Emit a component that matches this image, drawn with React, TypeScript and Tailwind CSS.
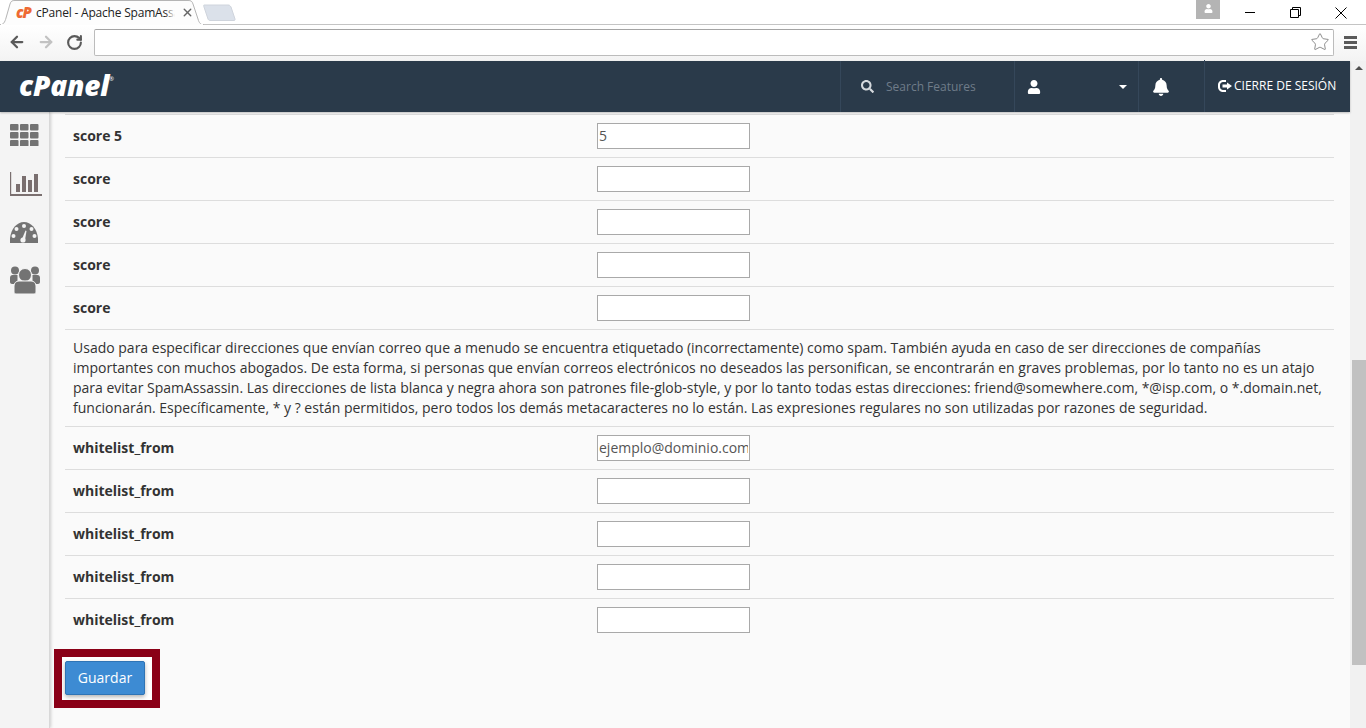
import React from 'react';
import { FaBell, FaSearch, FaUser } from 'react-icons/fa';
import { ArrowLeft, ArrowRight, RotateCw, Star, X } from 'lucide-react';

const font = { fontFamily: '"Open Sans", sans-serif' };

const GridIcon = () => (
  <svg width="29" height="22" viewBox="0 0 29 22" fill="#737373">
    {[0, 8, 16].map((y) =>
      [0, 10, 20].map((x) => <rect key={`${x}-${y}`} x={x} y={y} width="8.5" height="6.5" rx="1" />),
    )}
  </svg>
);

const ChartIcon = () => (
  <svg width="32" height="24" viewBox="0 0 32 24" fill="#7a6f6f">
    <path d="M0 0h1.2v22H32v2H0z" />
    <rect x="6" y="12" width="4" height="8" />
    <rect x="12" y="4" width="4" height="16" />
    <rect x="18" y="8" width="4" height="12" />
    <rect x="24" y="2" width="4" height="18" />
  </svg>
);

const GaugeIcon = () => (
  <svg width="28" height="21" viewBox="0 0 28 21">
    <path d="M0 21C-1 9 6 0 14 0S29 9 28 21Z" fill="#737373" />
    <g fill="#f4f4f4">
      <circle cx="14" cy="4" r="2" />
      <circle cx="6.5" cy="7" r="2" />
      <circle cx="21.5" cy="7" r="2" />
      <circle cx="3.5" cy="14" r="2" />
      <circle cx="24.5" cy="14" r="2" />
      <circle cx="13" cy="18" r="2.6" />
      <path d="M12 17 15.5 8.5 16.5 9 15 18Z" />
    </g>
  </svg>
);

const UsersIcon = () => (
  <svg width="30" height="28" viewBox="0 0 30 28" fill="#737373">
    <circle cx="5" cy="4.5" r="4" />
    <circle cx="25" cy="4.5" r="4" />
    <path d="M0 12c0-2 1-3 2.5-3h5v9H2c-1 0-2-1-2-2z" />
    <path d="M30 12c0-2-1-3-2.5-3h-5v9H28c1 0 2-1 2-2z" />
    <circle cx="15" cy="9" r="6.5" stroke="#f4f4f4" strokeWidth="1" />
    <path d="M4 20c0-3 2-5 5-5h12c3 0 5 2 5 5v6c0 1-1 2-2 2H6c-1 0-2-1-2-2z" stroke="#f4f4f4" strokeWidth="1" />
  </svg>
);

const LogoutIcon = () => (
  <svg width="14" height="12" viewBox="0 0 14 12" fill="white">
    <path d="M5 0h3v2H5C3.4 2 2 3.4 2 5v2c0 1.6 1.4 3 3 3h3v2H5C2.2 12 0 9.8 0 7V5C0 2.2 2.2 0 5 0z" />
    <path d="M9 2.5 14 6l-5 3.5V7.5H4.5v-3H9z" />
  </svg>
);

const Row = ({ label, value }: { label: string; value?: string }) => (
  <div className="flex border-t border-[#dddddd] px-2 py-2 h-[43px] items-center">
    <div className="w-[524px] -mt-[2px] font-bold text-[14px] text-[#333333]">{label}</div>
    <input
      readOnly
      defaultValue={value}
      className="w-[153px] h-[26px] bg-white border border-[#a9a9a9] px-[1px] pb-[2px] text-[14px] text-[#555555] outline-none"
      style={font}
    />
  </div>
);

export default function App() {
  return (
    <div className="w-[1366px] h-[728px] overflow-hidden flex flex-col bg-white" style={font}>
      {/* Tab strip */}
      <div className="h-[25px] flex items-end relative border-b border-[#c4c4c4]">
        <div className="relative w-[204px] h-[25px] -mb-[1px]">
          <svg className="absolute inset-0" width="204" height="25" viewBox="0 0 204 25">
            <path d="M0 25C3 25 5 22 6 18L10 4C11 1 12 .5 15 .5H188C191 .5 192 1 193 4L198 19C199 23 201 25 204 25Z" fill="#fdfdfd" stroke="#b5b5b5" />
            <rect x="1" y="24" width="202" height="2" fill="#fdfdfd" />
          </svg>
          <div className="absolute left-[16px] top-[4px] h-[17px] flex items-center gap-[4px] w-[180px]">
            <span className="font-extrabold italic text-[15px] leading-none text-[#ee6a33] tracking-[-1px] w-[16px] shrink-0">cP</span>
            <span className="text-[12px] tracking-[-0.2px] text-[#222222] whitespace-nowrap overflow-hidden w-[139px] shrink-0">cPanel - Apache SpamAssassin</span>
            <X size={13} strokeWidth={2.5} className="text-[#666666] ml-[2px] shrink-0" />
          </div>
          <div className="absolute left-[165px] top-[4px] w-[10px] h-[17px] bg-gradient-to-r from-transparent to-[#fdfdfd]" />
        </div>
        <svg className="mb-[3px] -ml-[1px]" width="33" height="17" viewBox="0 0 33 17">
          <path d="M1 1H25C26.5 1 27 1.5 28 3L32 15C32.2 16 32 16.5 31 16.5H7C6 16.5 5.5 16 5 15L1 3C.7 1.5 .5 1 1 1Z" fill="#dbe1ea" stroke="#cfd4dc" />
        </svg>
        {/* window controls */}
        <div className="absolute right-[146px] top-0 w-[24px] h-[19px] bg-[#b4b4b4] flex items-center justify-center">
          <FaUser size={9} className="text-white -mt-[3px]" />
        </div>
        <div className="absolute left-[1245px] top-[12px] w-[10px] h-[1px] bg-black" />
        <svg className="absolute left-[1290px] top-[7px]" width="11" height="11" viewBox="0 0 11 11" fill="none" stroke="black">
          <path d="M.5 2.5h8v8h-8z" />
          <path d="M2.5 2.5v-2h8v8h-2" />
        </svg>
        <svg className="absolute left-[1335px] top-[7px]" width="12" height="12" viewBox="0 0 12 12" fill="none" stroke="black">
          <path d="M.5.5l11 11M11.5.5l-11 11" />
        </svg>
      </div>

      {/* Toolbar */}
      <div className="h-[36px] bg-gradient-to-b from-white to-[#f3f3f3] flex items-center pb-[2px]">
        <div className="w-[94px] flex items-center pl-[8px] gap-[11px]">
          <ArrowLeft size={18} strokeWidth={3} className="text-[#5a5a5a]" />
          <ArrowRight size={18} strokeWidth={3} className="text-[#c2c2c2]" />
          <RotateCw size={17} strokeWidth={3} className="text-[#5a5a5a]" />
        </div>
        <div className="w-[1240px] h-[27px] bg-white border border-[#bcbcbc] border-t-[#a4a4a4] rounded-[2px] flex items-center justify-end pr-[3px]">
          <Star size={20} strokeWidth={1} className="text-[#777777]" />
        </div>
        <div className="flex-1 flex flex-col items-center gap-[2px]">
          <div className="w-[13px] h-[3px] bg-[#5a5a5a]" />
          <div className="w-[13px] h-[3px] bg-[#5a5a5a]" />
          <div className="w-[13px] h-[3px] bg-[#5a5a5a]" />
        </div>
      </div>

      <div className="flex-1 flex min-h-0">
        <div className="w-[1350px] flex flex-col min-h-0">
          {/* cPanel nav */}
          <div className="h-[51px] bg-[#2a3a4a] flex shrink-0 text-white shadow-[0_1px_2px_rgba(0,0,0,0.25)] relative">
            <div className="w-[840px] pl-[19px] pb-[3px] flex items-center">
              <span className="font-extrabold italic text-[28px] leading-none tracking-[-0.2px] text-white">cPanel</span>
              <span className="text-[6px] self-start mt-[14px]">®</span>
            </div>
            <div className="w-[174px] border-l border-[#35475a] flex items-center pl-[20px] gap-[12px]">
              <FaSearch size={13} className="text-[#d5d9dd]" />
              <span className="text-[12px] text-[#6f7c89]">Search Features</span>
            </div>
            <div className="w-[124px] border-l border-[#35475a] flex items-center pl-[12px] justify-between pr-[11px]">
              <FaUser size={14} />
              <span className="w-0 h-0 border-x-[4px] border-x-transparent border-t-[4px] border-t-white" />
            </div>
            <div className="w-[66px] border-l border-[#35475a] flex items-center pl-[13px]">
              <FaBell size={18} />
            </div>
            <div className="flex-1 border-l border-[#35475a] flex items-center pl-[13px] gap-[2px] -mt-[1px]">
              <LogoutIcon />
              <span className="text-[12px] whitespace-nowrap">CIERRE DE SESIÓN</span>
            </div>
          </div>

          <div className="flex-1 flex min-h-0 bg-[#fafafa]">
            {/* Sidebar */}
            <div className="w-[50px] bg-[#f4f4f4] border-r border-[#d8d8d8] shadow-[1px_0_3px_rgba(0,0,0,0.18)] flex flex-col pl-[10px] pt-[12px] shrink-0">
              <GridIcon />
              <div className="mt-[26px]"><ChartIcon /></div>
              <div className="mt-[26px]"><GaugeIcon /></div>
              <div className="mt-[23px]"><UsersIcon /></div>
            </div>

            {/* Settings table */}
            <div className="flex-1 pt-[2px] min-w-0">
              <div className="ml-[15px] mr-[16px]">
                <Row label="score 5" value="5" />
                <Row label="score" />
                <Row label="score" />
                <Row label="score" />
                <Row label="score" />
                <div className="border-t border-[#dddddd] px-2 py-2 text-[14px] leading-[20px] text-[#333333]">
                  Usado para especificar direcciones que envían correo que a menudo se encuentra etiquetado (incorrectamente) como spam. También ayuda en caso de ser direcciones de compañías importantes con muchos abogados. De esta forma, si personas que envían correos electrónicos no deseados las personifican, se encontrarán en graves problemas, por lo tanto no es un atajo para evitar SpamAssassin. Las direcciones de lista blanca y negra ahora son patrones file-glob-style, y por lo tanto todas estas direcciones: friend@somewhere.com, *@isp.com, o *.domain.net, funcionarán. Específicamente, * y ? están permitidos, pero todos los demás metacaracteres no lo están. Las expresiones regulares no son utilizadas por razones de seguridad.
                </div>
                <Row label="whitelist_from" value="ejemplo@dominio.com" />
                <Row label="whitelist_from" />
                <Row label="whitelist_from" />
                <Row label="whitelist_from" />
                <Row label="whitelist_from" />
              </div>
              <div className="ml-[4px] mt-[8px] w-[106px] h-[59px] border-[8px] border-[#8a0017] bg-white pl-[3px] pt-[4px]">
                <button className="w-[80px] h-[34px] bg-[#3d8bd3] border border-[#2f74b5] rounded-[2px] text-white text-[14px] pb-[2px] shadow-[0_2px_4px_rgba(0,0,0,0.3)]">
                  Guardar
                </button>
              </div>
            </div>
          </div>
        </div>

        {/* Scrollbar */}
        <div className="w-[16px] bg-[#f1f1f1] flex flex-col items-center pt-[5px] pl-[1px]">
          <span className="w-0 h-0 border-x-[4px] border-x-transparent border-b-[4px] border-b-[#505050]" />
          <div className="w-[14px] h-[305px] bg-[#c1c1c1] mt-[290px]" />
        </div>
      </div>
    </div>
  );
}
